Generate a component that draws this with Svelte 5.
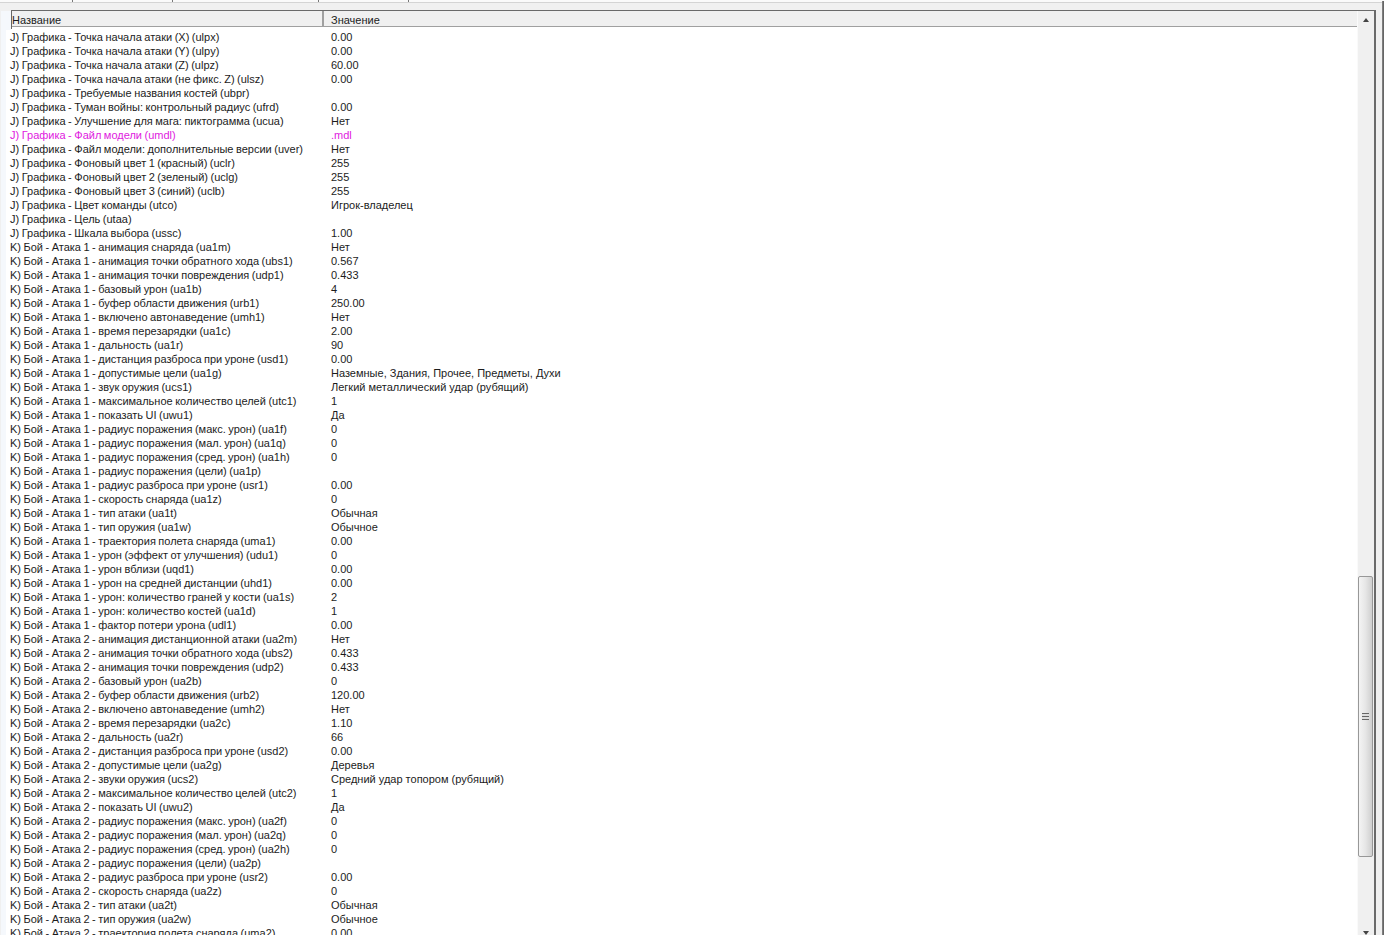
<script>
  const a1 = [
    ["анимация снаряда (ua1m)", "Нет"],
    ["анимация точки обратного хода (ubs1)", "0.567"],
    ["анимация точки повреждения (udp1)", "0.433"],
    ["базовый урон (ua1b)", "4"],
    ["буфер области движения (urb1)", "250.00"],
    ["включено автонаведение (umh1)", "Нет"],
    ["время перезарядки (ua1c)", "2.00"],
    ["дальность (ua1r)", "90"],
    ["дистанция разброса при уроне (usd1)", "0.00"],
    ["допустимые цели (ua1g)", "Наземные, Здания, Прочее, Предметы, Духи"],
    ["звук оружия (ucs1)", "Легкий металлический удар (рубящий)"],
    ["максимальное количество целей (utc1)", "1"],
    ["показать UI (uwu1)", "Да"],
    ["радиус поражения (макс. урон) (ua1f)", "0"],
    ["радиус поражения (мал. урон) (ua1q)", "0"],
    ["радиус поражения (сред. урон) (ua1h)", "0"],
    ["радиус поражения (цели) (ua1p)", ""],
    ["радиус разброса при уроне (usr1)", "0.00"],
    ["скорость снаряда (ua1z)", "0"],
    ["тип атаки (ua1t)", "Обычная"],
    ["тип оружия (ua1w)", "Обычное"],
    ["траектория полета снаряда (uma1)", "0.00"],
    ["урон (эффект от улучшения) (udu1)", "0"],
    ["урон вблизи (uqd1)", "0.00"],
    ["урон на средней дистанции (uhd1)", "0.00"],
    ["урон: количество граней у кости (ua1s)", "2"],
    ["урон: количество костей (ua1d)", "1"],
    ["фактор потери урона (udl1)", "0.00"]
  ];
  const a2 = [
    ["анимация дистанционной атаки (ua2m)", "Нет"],
    ["анимация точки обратного хода (ubs2)", "0.433"],
    ["анимация точки повреждения (udp2)", "0.433"],
    ["базовый урон (ua2b)", "0"],
    ["буфер области движения (urb2)", "120.00"],
    ["включено автонаведение (umh2)", "Нет"],
    ["время перезарядки (ua2c)", "1.10"],
    ["дальность (ua2r)", "66"],
    ["дистанция разброса при уроне (usd2)", "0.00"],
    ["допустимые цели (ua2g)", "Деревья"],
    ["звуки оружия (ucs2)", "Средний удар топором (рубящий)"],
    ["максимальное количество целей (utc2)", "1"],
    ["показать UI (uwu2)", "Да"],
    ["радиус поражения (макс. урон) (ua2f)", "0"],
    ["радиус поражения (мал. урон) (ua2q)", "0"],
    ["радиус поражения (сред. урон) (ua2h)", "0"],
    ["радиус поражения (цели) (ua2p)", ""],
    ["радиус разброса при уроне (usr2)", "0.00"],
    ["скорость снаряда (ua2z)", "0"],
    ["тип атаки (ua2t)", "Обычная"],
    ["тип оружия (ua2w)", "Обычное"],
    ["траектория полета снаряда (uma2)", "0.00"]
  ];
  const g = [
    ["Точка начала атаки (X) (ulpx)", "0.00"],
    ["Точка начала атаки (Y) (ulpy)", "0.00"],
    ["Точка начала атаки (Z) (ulpz)", "60.00"],
    ["Точка начала атаки (не фикс. Z) (ulsz)", "0.00"],
    ["Требуемые названия костей (ubpr)", ""],
    ["Туман войны: контрольный радиус (ufrd)", "0.00"],
    ["Улучшение для мага: пиктограмма (ucua)", "Нет"],
    ["Файл модели (umdl)", ".mdl", true],
    ["Файл модели: дополнительные версии (uver)", "Нет"],
    ["Фоновый цвет 1 (красный) (uclr)", "255"],
    ["Фоновый цвет 2 (зеленый) (uclg)", "255"],
    ["Фоновый цвет 3 (синий) (uclb)", "255"],
    ["Цвет команды (utco)", "Игрок-владелец"],
    ["Цель (utaa)", ""],
    ["Шкала выбора (ussc)", "1.00"]
  ];
  const rows = [
    ...g.map(([n, v, m]) => ({ name: "J) Графика - " + n, value: v, mod: !!m })),
    ...a1.map(([n, v]) => ({ name: "K) Бой - Атака 1 - " + n, value: v, mod: false })),
    ...a2.map(([n, v]) => ({ name: "K) Бой - Атака 2 - " + n, value: v, mod: false }))
  ];
</script>

<div class="window">
  <div class="tabs">
    <span class="tab t1"></span>
    <span class="tab t2"></span>
    <span class="tab t3"></span>
    <span class="tab t4"></span>
  </div>
  <div class="frame">
    <div class="gutter"></div>
    <div class="list">
      <div class="main">
        <div class="header">
          <div class="hcell hname">Название</div>
          <div class="hcell hvalue">Значение</div>
        </div>
        <div class="rows">
          {#each rows as r}
            <div class="row" class:mod={r.mod}>
              <span class="name">{r.name}</span>
              <span class="value">{r.value}</span>
            </div>
          {/each}
        </div>
      </div>
      <div class="scrollbar">
        <div class="arrow up"></div>
        <div class="spacer"></div>
        <div class="thumb">
          <span class="grip"></span>
        </div>
        <div class="track-end"></div>
        <div class="arrow down"></div>
      </div>
    </div>
    <div class="outer"></div>
  </div>
</div>

<style>
  :global(body) {
    margin: 0;
    background: #f0f0f0;
  }
  .window {
    width: 1384px;
    height: 935px;
    overflow: hidden;
    display: flex;
    flex-direction: column;
    font-family: "Liberation Sans", Arial, sans-serif;
    font-size: 11px;
    color: #1c1c1c;
    background: #f0f0f0;
  }
  .tabs {
    height: 2px;
    flex: none;
    display: flex;
    background: #fafafa;
    border-bottom: 1px solid #d4d4d4;
    padding-left: 72px;
  }
  .tab {
    width: 1px;
    background: #777;
  }
  .t2 { margin-left: 99px; }
  .t3 { margin-left: 145px; }
  .t4 { margin-left: 89px; }
  .frame {
    flex: 1;
    min-height: 0;
    display: flex;
    padding-top: 7px;
  }
  .gutter {
    flex: none;
    width: 10px;
    margin-left: 1px;
    margin-top: 1px;
    background: #f5f8fc;
  }
  .list {
    width: 1363px;
    display: flex;
    border-top: 1px solid #6a6a6a;
    border-right: 2px solid #6a6a6a;
    min-height: 0;
  }
  .main {
    width: 1346px;
    display: flex;
    flex-direction: column;
    background: #fff;
    min-height: 0;
  }
  .header {
    height: 15px;
    flex: none;
    display: flex;
    background: #f0f0f0;
    border-bottom: 1px solid #a0a0a0;
    line-height: 18px;
  }
  .hcell {
    box-sizing: border-box;
    height: 15px;
  }
  .hname {
    position: relative;
    width: 313px;
    padding-left: 1px;
    border-right: 2px solid #a0a0a0;
  }
  .hname::before {
    content: "";
    position: absolute;
    left: 0;
    top: 0;
    width: 1px;
    height: 18px;
    background: #666;
  }
  .hvalue {
    padding-left: 7px;
  }
  .rows {
    margin: 3px 0 0 -5px;
    background: #fff;
    flex: 1;
    min-height: 0;
  }
  .row {
    height: 14px;
    line-height: 14px;
    display: flex;
    white-space: nowrap;
  }
  .name {
    width: 325px;
    flex: none;
    padding-left: 4px;
    box-sizing: border-box;
    word-spacing: -0.55px;
  }
  .mod {
    color: #e020e0;
  }
  .scrollbar {
    width: 17px;
    display: flex;
    flex-direction: column;
    background: #f0f0f0;
    border-left: 1px solid #fafafa;
    box-sizing: border-box;
    min-height: 0;
  }
  .arrow {
    flex: none;
    width: 0;
    height: 0;
    margin-left: 5px;
    border-left: 3.5px solid transparent;
    border-right: 3.5px solid transparent;
  }
  .up {
    margin-top: 7px;
    border-bottom: 4px solid #444;
  }
  .spacer {
    height: 554px;
    flex: none;
  }
  .thumb {
    flex: none;
    height: 281px;
    width: 15px;
    box-sizing: border-box;
    border: 1px solid #989898;
    border-radius: 2px;
    background: linear-gradient(to right, #f4f4f4 0%, #e6e6e6 50%, #cfcfcf 100%);
    display: flex;
    align-items: center;
    justify-content: center;
  }
  .grip {
    width: 7px;
    height: 7px;
    background: repeating-linear-gradient(to bottom, #666 0 1px, #ddd 1px 3px);
  }
  .track-end {
    height: 74px;
    flex: none;
  }
  .down {
    border-top: 4px solid #444;
  }
  .outer {
    width: 3px;
    margin-left: 6px;
    margin-top: -9px;
    background: linear-gradient(to right, #8a8a8a, #5a5a5a);
  }
</style>
